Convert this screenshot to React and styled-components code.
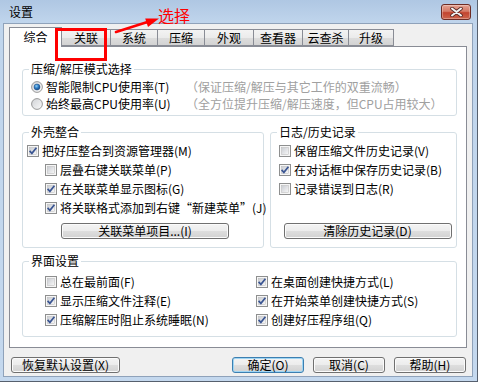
import React from "react";
import styled, { createGlobalStyle } from "styled-components";

const GlobalStyle = createGlobalStyle`
  * { box-sizing: border-box; }
  html, body { margin: 0; padding: 0; background: #fff; }
  body {
    font-family: "Noto Sans CJK SC", "Liberation Sans", sans-serif;
    font-size: 12px;
    color: #000;
  }
`;

const Window = styled.div`
  position: relative;
  width: 478px;
  height: 382px;
  display: flex;
  flex-direction: column;
  padding: 0 4px 4px 3px;
  background: linear-gradient(#afc7e3 0, #c0d5ec 23px, #c4d8ee 100%);
  border-right: 1px solid #56606e;
  border-bottom: 1px solid #56606e;
  overflow: hidden;
`;

const TitleBar = styled.div`
  height: 23px;
  flex: none;
  display: flex;
  align-items: flex-start;
  justify-content: space-between;
  padding: 0 2px 0 6px;
`;

const Caption = styled.span`
  line-height: 14px;
  margin-top: 5px;
`;

const CloseButton = styled.div`
  width: 30px;
  height: 16px;
  margin-top: 4px;
  border: 1px solid #6e2c24;
  border-radius: 3px;
  background: linear-gradient(#e4a292 0%, #d57a66 45%, #c2442f 55%, #cd654d 100%);
  box-shadow: inset 0 0 0 1px rgba(255, 255, 255, 0.3);
  display: flex;
  align-items: center;
  justify-content: center;
`;

const Client = styled.div`
  flex: 1;
  display: flex;
  flex-direction: column;
  background: #f0f0f0;
  border: 1px solid #8fa2ba;
  padding: 3px 5px 0 5px;
`;

const TabStrip = styled.div`
  height: 19px;
  flex: none;
  display: flex;
  align-items: flex-end;
`;

const Tab = styled.div`
  position: relative;
  width: ${(p) => p.$w}px;
  height: ${(p) => (p.$active ? 20 : 17)}px;
  margin-left: ${(p) => (p.$first ? 0 : -1)}px;
  margin-bottom: ${(p) => (p.$active ? -1 : 0)}px;
  padding-bottom: ${(p) => (p.$active ? 2 : 0)}px;
  z-index: ${(p) => (p.$active ? 2 : 1)};
  border: 1px solid #898c95;
  border-bottom: ${(p) => (p.$active ? "none" : "1px solid #898c95")};
  background: ${(p) =>
    p.$active ? "#fff" : "linear-gradient(#f3f3f3 0%, #ebebeb 50%, #dddddd 51%, #d3d3d3 100%)"};
  display: flex;
  align-items: center;
  justify-content: center;
  line-height: 14px;
  white-space: nowrap;
`;

const Panel = styled.div`
  height: 302px;
  flex: none;
  display: flex;
  flex-direction: column;
  background: #fff;
  border: 1px solid #898c95;
  padding: 16px 9px 0 12px;
`;

const GroupBox = styled.div`
  display: flex;
  flex-direction: column;
  border: 1px solid #d5dfe5;
  border-radius: 3px;
  margin-top: ${(p) => p.$mt || 0}px;
  padding-bottom: ${(p) => p.$pb}px;
`;

const GroupTitle = styled.div`
  align-self: flex-start;
  margin: -7px 0 0 6px;
  padding: 0 2px;
  height: 12px;
  line-height: 12px;
  background: #fff;
  white-space: nowrap;
`;

const GroupBody = styled.div`
  flex: 1;
  display: flex;
  flex-direction: column;
  padding-top: ${(p) => p.$pt}px;
  padding-left: ${(p) => p.$pl}px;
`;

const RowList = styled.div`
  flex: 1;
  display: flex;
  flex-direction: column;
  padding-bottom: 6px;
`;

const ModeGrid = styled.div`
  display: grid;
  grid-template-columns: 155px auto;
  grid-auto-rows: 17px;
  align-items: center;
`;

const Hint = styled.span`
  color: #a0a0a0;
  white-space: nowrap;
`;

const SplitRow = styled.div`
  display: grid;
  grid-template-columns: 242px 1fr;
  gap: 6px;
  margin-top: 16px;
`;

const TwoCols = styled.div`
  display: grid;
  grid-template-columns: 211px 211px;
  grid-auto-rows: 19px;
  align-items: center;
`;

const Option = styled.label`
  display: flex;
  align-items: center;
  gap: 3px;
  height: ${(p) => p.$h || 19}px;
  margin-left: ${(p) => p.$indent || 0}px;
  white-space: nowrap;
  line-height: 14px;
  svg { flex: none; }
`;

const Button = styled.div`
  width: ${(p) => p.$w}px;
  height: 16px;
  flex: none;
  border: 1px solid ${(p) => (p.$default ? "#3c7fb1" : "#707070")};
  border-radius: 3px;
  background: linear-gradient(#f4f4f4 0%, #ececec 50%, #dedede 51%, #d2d2d2 100%);
  box-shadow: inset 0 0 0 1px ${(p) => (p.$default ? "#9fd5f3" : "#fbfbfb")};
  display: flex;
  align-items: center;
  justify-content: center;
  line-height: 14px;
  white-space: nowrap;
`;

const GroupButton = styled(Button)`
  align-self: center;
`;

const ButtonRow = styled.div`
  display: flex;
  align-items: center;
  margin-top: 9px;
  padding: 0 1px 0 2px;
`;

const RightButtons = styled.div`
  margin-left: auto;
  display: flex;
  gap: 9px;
`;

const Marker = styled.div`
  position: absolute;
  left: 55px;
  top: 28px;
  width: 52px;
  height: 33px;
  border: 3px solid #f00;
  z-index: 5;
`;

const Arrow = styled.svg`
  position: absolute;
  left: 110px;
  top: 12px;
  z-index: 5;
`;

const Note = styled.div`
  position: absolute;
  left: 158px;
  top: 5px;
  font-size: 16px;
  line-height: 20px;
  color: #f00;
  z-index: 5;
`;

const Defs = () => (
  <svg width="0" height="0" style={{ position: "absolute" }}>
    <defs>
      <linearGradient id="cbFill" x1="0" y1="0" x2="1" y2="1">
        <stop offset="0" stopColor="#c9ccd2" />
        <stop offset="1" stopColor="#f8f8f8" />
      </linearGradient>
      <linearGradient id="rdFill" x1="0" y1="0" x2="1" y2="1">
        <stop offset="0" stopColor="#d0d2d6" />
        <stop offset="1" stopColor="#fafafa" />
      </linearGradient>
      <radialGradient id="rdDot" cx="0.4" cy="0.35" r="0.7">
        <stop offset="0" stopColor="#8fd0f5" />
        <stop offset="0.5" stopColor="#2c7bc4" />
        <stop offset="1" stopColor="#143f78" />
      </radialGradient>
    </defs>
  </svg>
);

const Check = ({ on }) => (
  <svg width="12" height="12" viewBox="0 0 12 12">
    <rect x="0.5" y="0.5" width="11" height="11" fill="#f6f6f6" stroke="#8e8f8f" />
    <rect x="2.5" y="2.5" width="7" height="7" fill="url(#cbFill)" stroke="#b8b8b8" strokeWidth="0.5" />
    {on && <path d="M2.6 5.9 L4.9 8.4 L9.4 2.7" fill="none" stroke="#3a5592" strokeWidth="1.7" />}
  </svg>
);

const Radio = ({ on }) => (
  <svg width="12" height="12" viewBox="0 0 12 12">
    <circle cx="6" cy="6" r="5.4" fill="url(#rdFill)" stroke="#8e8f8f" strokeWidth="0.9" />
    {on && <circle cx="6" cy="6" r="3" fill="url(#rdDot)" stroke="#1c4c85" strokeWidth="0.5" />}
  </svg>
);

const tabs = [
  { label: "综合", w: 53, active: true },
  { label: "关联", w: 50 },
  { label: "系统", w: 48 },
  { label: "压缩", w: 48 },
  { label: "外观", w: 50 },
  { label: "查看器", w: 50 },
  { label: "云查杀", w: 47 },
  { label: "升级", w: 46 },
];

const shell = [
  { label: "把好压整合到资源管理器(M)", on: true },
  { label: "层叠右键关联菜单(P)", on: false, indent: 18 },
  { label: "在关联菜单显示图标(G)", on: true, indent: 18 },
  { label: "将关联格式添加到右键“新建菜单”(J)", on: true, indent: 18 },
];

const history = [
  { label: "保留压缩文件历史记录(V)", on: false },
  { label: "在对话框中保存历史记录(B)", on: true },
  { label: "记录错误到日志(R)", on: false },
];

const ui = [
  { label: "总在最前面(F)", on: false },
  { label: "在桌面创建快捷方式(L)", on: true },
  { label: "显示压缩文件注释(E)", on: true },
  { label: "在开始菜单创建快捷方式(S)", on: true },
  { label: "压缩解压时阻止系统睡眠(N)", on: true },
  { label: "创建好压程序组(Q)", on: true },
];

export default function App() {
  return (
    <>
      <GlobalStyle />
      <Defs />
      <Window>
        <TitleBar>
          <Caption>设置</Caption>
          <CloseButton>
            <svg width="13" height="10" viewBox="0 0 13 10">
              <path d="M2 1.5 L11 8.5 M11 1.5 L2 8.5" stroke="#5a2a25" strokeWidth="3.6" strokeLinecap="round" />
              <path d="M2 1.5 L11 8.5 M11 1.5 L2 8.5" stroke="#f4f4f4" strokeWidth="2" strokeLinecap="round" />
            </svg>
          </CloseButton>
        </TitleBar>
        <Client>
          <TabStrip>
            {tabs.map((t, i) => (
              <Tab key={t.label} $w={t.w} $active={t.active} $first={i === 0}>
                {t.label}
              </Tab>
            ))}
          </TabStrip>
          <Panel>
            <GroupBox $mt={6} $pb={3}>
              <GroupTitle>压缩/解压模式选择</GroupTitle>
              <GroupBody $pt={3} $pl={8}>
                <ModeGrid>
                  <Option $h={17}>
                    <Radio on />
                    智能限制CPU使用率(T)
                  </Option>
                  <Hint>（保证压缩/解压与其它工作的双重流畅）</Hint>
                  <Option $h={17}>
                    <Radio />
                    始终最高CPU使用率(U)
                  </Option>
                  <Hint>（全方位提升压缩/解压速度，但CPU占用较大）</Hint>
                </ModeGrid>
              </GroupBody>
            </GroupBox>

            <SplitRow>
              <GroupBox $pb={8}>
                <GroupTitle>外壳整合</GroupTitle>
                <GroupBody $pt={3} $pl={4}>
                  <RowList>
                    {shell.map((o) => (
                      <Option key={o.label} $indent={o.indent}>
                        <Check on={o.on} />
                        {o.label}
                      </Option>
                    ))}
                  </RowList>
                  <GroupButton $w={168}>关联菜单项目...(I)</GroupButton>
                </GroupBody>
              </GroupBox>
              <GroupBox $pb={8}>
                <GroupTitle>日志/历史记录</GroupTitle>
                <GroupBody $pt={3} $pl={8}>
                  <RowList>
                    {history.map((o) => (
                      <Option key={o.label}>
                        <Check on={o.on} />
                        {o.label}
                      </Option>
                    ))}
                  </RowList>
                  <GroupButton $w={168}>清除历史记录(D)</GroupButton>
                </GroupBody>
              </GroupBox>
            </SplitRow>

            <GroupBox $mt={13} $pb={7}>
              <GroupTitle>界面设置</GroupTitle>
              <GroupBody $pt={5} $pl={22}>
                <TwoCols>
                  {ui.map((o) => (
                    <Option key={o.label}>
                      <Check on={o.on} />
                      {o.label}
                    </Option>
                  ))}
                </TwoCols>
              </GroupBody>
            </GroupBox>
          </Panel>
          <ButtonRow>
            <Button $w={109}>恢复默认设置(X)</Button>
            <RightButtons>
              <Button $w={72} $default>确定(O)</Button>
              <Button $w={72}>取消(C)</Button>
              <Button $w={72}>帮助(H)</Button>
            </RightButtons>
          </ButtonRow>
        </Client>

        <Marker />
        <Arrow width="52" height="24" viewBox="110 12 52 24">
          <path d="M116 32 L149 21.5" stroke="#f00" strokeWidth="2.6" strokeLinecap="round" />
          <polygon points="159,18.6 145.2,18.4 148,27" fill="#f00" />
        </Arrow>
        <Note>选择</Note>
      </Window>
    </>
  );
}
